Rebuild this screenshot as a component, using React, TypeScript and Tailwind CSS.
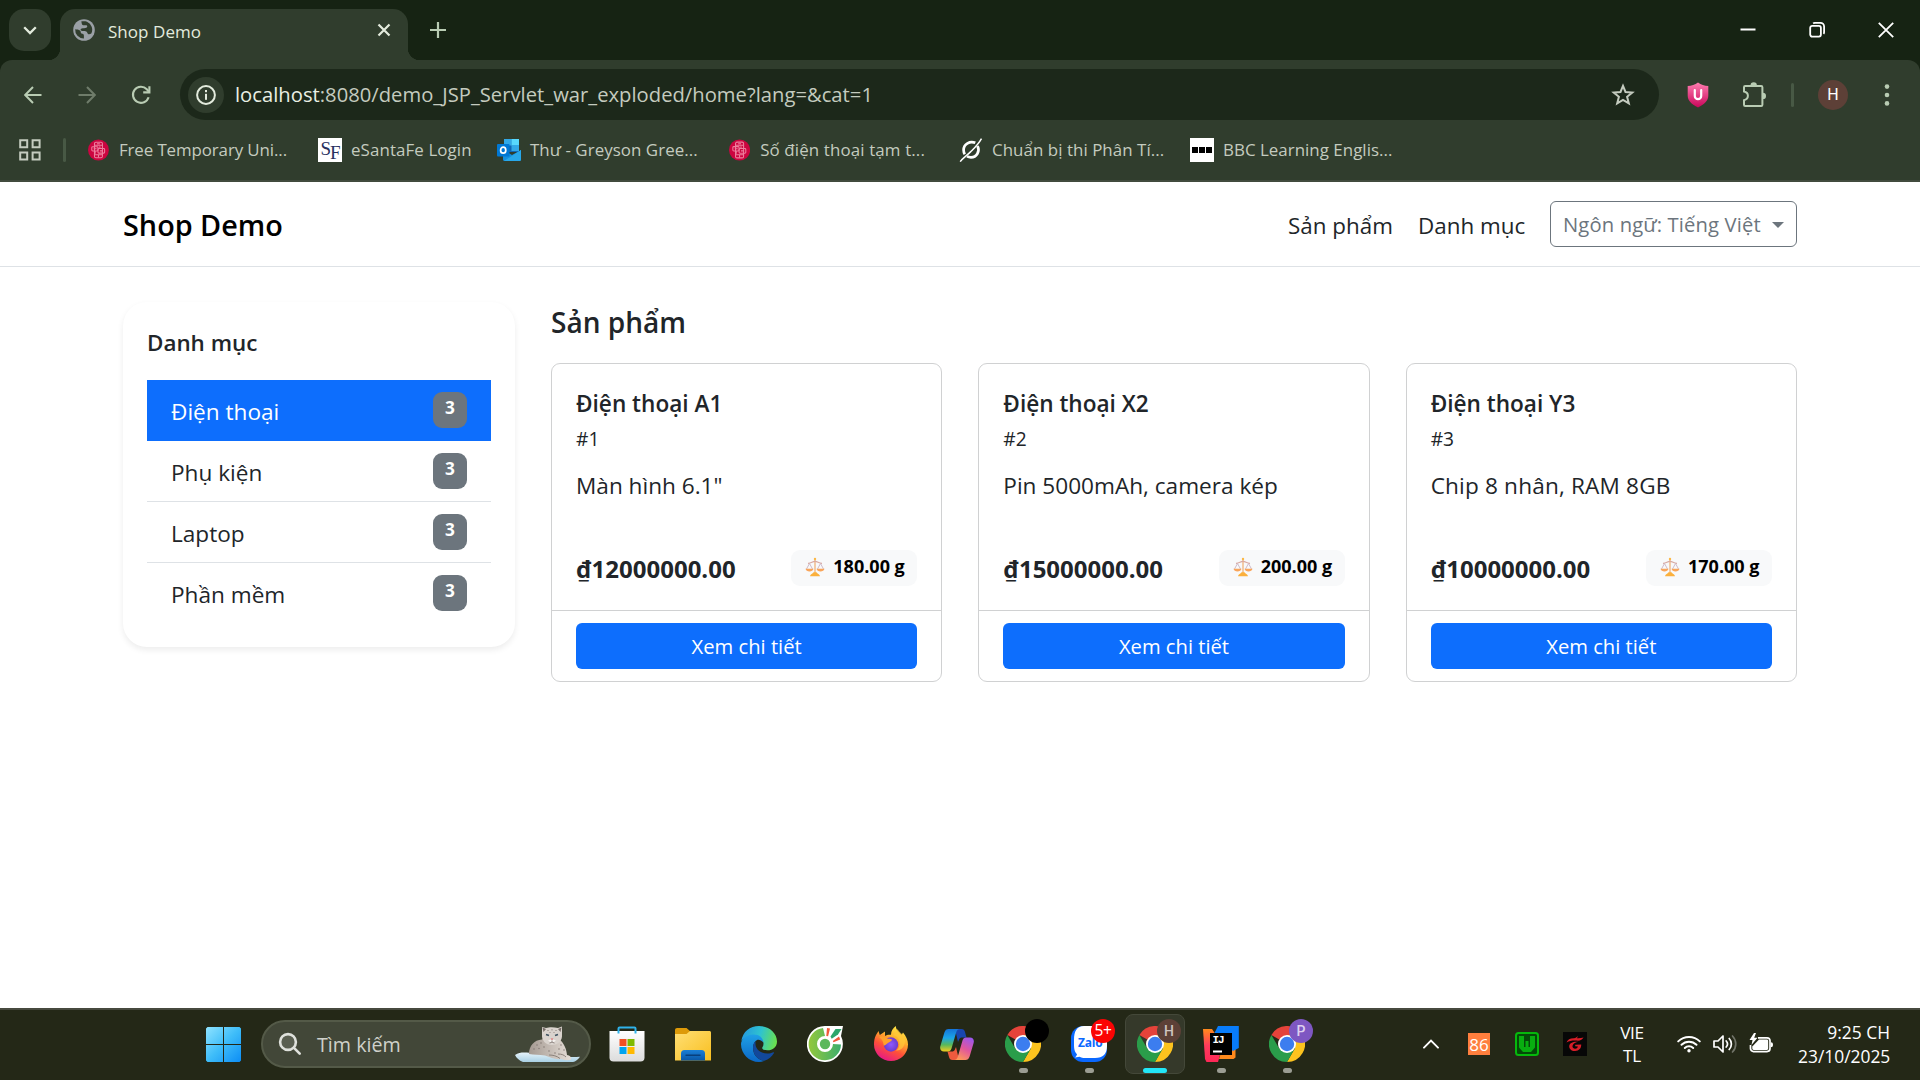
import React from "react";

type IconProps = { className?: string };

/* ---------- browser icons ---------- */

const Globe = () => (
  <svg viewBox="0 0 22 22" className="size-[22px]">
    <circle cx="11" cy="11" r="10.8" fill="#9aa0a6" />
    <path d="M2.2 10.2c1.8.2 3.6.2 4.8 1.4 1.200 1.100.3 2.300 1.500 3 1.200.600 2.300.400 2.400 1.800v3.100A8.600 8.600 0 0 1 2.200 10.200Z" fill="#303d2d" />
    <path d="M8.200 2.600c.8 1.500.2 2.900 1.500 3.500 1.600.700 3.300-.6 4.200.5.9 1.100-.1 2.100-1.500 2.400-1.700.4-3.500-.2-4.600 1-.6.8.2 1.900 1.300 2 1.700.1 3.400-.4 4.600.8.8.8.600 2 1.700 2.400 1 .3 2-.2 2.900-.7A8.700 8.700 0 0 0 14 2.700c-1.800-.6-4-.6-5.800-.1Z" fill="#303d2d" />
  </svg>
);

const ArrowLeft = ({ className }: IconProps) => (
  <svg viewBox="0 0 18 18" className={`size-[18px] ${className ?? ""}`} fill="none" stroke="currentColor" strokeWidth="2">
    <path d="M17.500 9H1.600M9 1 1.200 9 9 17" />
  </svg>
);

const Reload = () => (
  <svg viewBox="0 0 20 20" className="size-5" fill="none" stroke="#b9ccb3" strokeWidth="2.100">
    <path d="M17.600 12.200A8 8 0 1 1 15.800 4.300l2.200 2.400" />
    <path d="M18.400 1.200v6.200h-6.200" />
  </svg>
);

const Info = () => (
  <svg viewBox="0 0 20 20" className="size-5">
    <circle cx="10" cy="10" r="8.900" fill="none" stroke="#e3ebdd" strokeWidth="2" />
    <rect x="9" y="8.800" width="2" height="6" fill="#e3ebdd" />
    <rect x="9" y="5" width="2" height="2.200" fill="#e3ebdd" />
  </svg>
);

const Star = () => (
  <svg viewBox="0 0 24 24" className="size-6" fill="none" stroke="#c4cbbf" strokeWidth="2" strokeLinejoin="miter">
    <path d="M12 2.900 14.500 9l6.800.500-5.200 4.300 1.700 6.500L12 16.800l-5.800 3.500 1.700-6.500L2.700 9.500 9.500 9Z" />
  </svg>
);

const Shield = () => (
  <svg viewBox="0 0 22 26" className="h-[26px] w-[22px]">
    <defs>
      <linearGradient id="shield" x1="0" y1="0" x2="0" y2="1">
        <stop offset="0" stopColor="#ff7eb0" />
        <stop offset="1" stopColor="#c9065a" />
      </linearGradient>
    </defs>
    <path d="M11 .5c3 2.300 6.500 3.400 10.300 3.600v9.400c0 5.300-4 9-10.300 12C4.700 22.500.7 18.800.7 13.500V4.100C4.500 3.900 8 2.800 11 .5Z" fill="url(#shield)" />
    <path d="M7.800 8v6a3.200 3.200 0 0 0 6.400 0V8" fill="none" stroke="#fff" strokeWidth="2.200" strokeLinecap="round" />
  </svg>
);

const Puzzle = () => (
  <svg viewBox="0 0 26 26" className="size-[26px]">
    <path
      d="M4.200 4h16c.7 0 1.200.5 1.200 1.200v17.600c0 .7-.5 1.200-1.200 1.200H4.200C3.500 24 3 23.500 3 22.800v-4.600c2.500-.6 3.900-2 3.900-4.400S5.500 10 3 9.500V5.200C3 4.500 3.500 4 4.200 4Z"
      fill="none" stroke="#b9ccb3" strokeWidth="2"
    />
    <path d="M9.500 3.500a3.200 3.200 0 0 1 6.400 0ZM21.800 10.700a3.200 3.200 0 0 1 0 6.400Z" fill="#b9ccb3" />
  </svg>
);

const AppsGrid = () => (
  <svg viewBox="0 0 22 22" className="size-[22px]" fill="none" stroke="#c4cbbf" strokeWidth="2">
    <path d="M1.200 1.200h7v7h-7zM13.600 1.200h7v7h-7zM1.200 13.600h7v7h-7zM13.600 13.600h7v7h-7z" />
  </svg>
);

const PhonesIcon = () => (
  <svg viewBox="0 0 22 22" className="size-[22px]">
    <circle cx="11" cy="11" r="11" fill="#cb0540" />
    <g fill="none" stroke="#ee7f9d" strokeWidth="1.100">
      <rect x="6.800" y="2.800" width="8.400" height="16.400" rx="1.500" />
      <path d="M7 6h8M7 16h8M9.500 4.400h3M11 16v3" />
      <rect x="4" y="7.500" width="6.500" height="4.500" rx="1" />
      <rect x="10.500" y="9.500" width="7" height="4.800" rx="1" />
      <path d="M6 9.700h3M7.500 12v3M12.500 11.900h3M12.500 9V7" />
    </g>
  </svg>
);

const SantaFeIcon = () => (
  <span className="flex h-6 w-6 items-center justify-center bg-white font-['Liberation_Serif',serif] text-[19px] leading-none tracking-[-1px] text-[#27305f]">
    <span className="-mt-1">S</span>
    <span className="mt-1">F</span>
  </span>
);

const OutlookIcon = () => (
  <svg viewBox="0 0 24 22" className="h-[22px] w-6">
    <rect x="7" y="0" width="15" height="13" fill="#1066b5" />
    <rect x="7" y="0" width="7.500" height="6.500" fill="#32a9e7" />
    <rect x="14.500" y="0" width="7.500" height="6.500" fill="#58d9fd" />
    <rect x="14.500" y="6" width="7.500" height="6" fill="#32a9e7" />
    <path d="M6 11l9 5 9-5v9.500c0 .8-.7 1.500-1.500 1.500h-15C6.700 22 6 21.300 6 20.500Z" fill="#1490df" />
    <path d="M24 11v9.500c0 .8-.7 1.500-1.500 1.500H7Z" fill="#28a8ea" />
    <rect x="0" y="5" width="12.500" height="12.500" rx="1" fill="#0078d4" />
    <ellipse cx="6.200" cy="11.200" rx="2.600" ry="3" fill="none" stroke="#fff" strokeWidth="1.700" />
  </svg>
);

const SlashCircleIcon = () => (
  <svg viewBox="0 0 24 24" className="size-6" fill="none" stroke="#fff">
    <path d="M16.300 4.800C11 2.500 4.600 6 4.600 12c0 1.600.4 3 1.200 4.300M18.600 8c2.600 5.500-1 11.300-6.600 11.300-1.600 0-2.800-.3-4-.9" strokeWidth="2.700" />
    <path d="M22.500.6c-3.500 6.200-6.700 9-11 13.300C7.800 17.600 4 20 1.200 23.600" strokeWidth="1.500" />
  </svg>
);

const BbcIcon = () => (
  <span className="flex size-6 items-center justify-center gap-px bg-white">
    <i className="h-1.5 w-1.5 bg-black" />
    <i className="h-1.5 w-1.5 bg-black" />
    <i className="h-1.5 w-1.5 bg-black" />
  </span>
);

/* ---------- browser chrome ---------- */

const TabStrip = () => (
  <div className="flex h-[60px] bg-[#162313] text-[#e3ebdd]">
    <div className="ml-[9px] mt-[9px] flex h-[42px] w-[42px] items-center justify-center rounded-[15px] bg-[#303d2d]">
      <svg viewBox="0 0 14 9" className="h-[9px] w-3.5" fill="none" stroke="currentColor" strokeWidth="2.300">
        <path d="m1.200 1.200 5.800 5.800 5.800-5.800" />
      </svg>
    </div>
    <div className="ml-[-3px] mt-12 h-3 w-3 bg-[radial-gradient(circle_at_0_0,#162313_12px,#303d2d_12.500px)]" />
    <div className="mt-[9px] flex h-[51px] w-[348px] rounded-t-[15px] bg-[#303d2d]">
      <div className="ml-[13px] mt-2.5"><Globe /></div>
      <div className="ml-[13px] mt-[9px] w-[254px] text-[17px] leading-7 tracking-[.05px]">Shop Demo</div>
      <svg viewBox="0 0 14 14" className="ml-[15px] mt-3.5 size-3.5" fill="none" stroke="currentColor" strokeWidth="2.200">
        <path d="m1.500 1.500 11 11m0-11-11 11" />
      </svg>
    </div>
    <div className="mt-12 h-3 w-3 bg-[radial-gradient(circle_at_12px_0,#162313_12px,#303d2d_12.500px)]" />
    <svg viewBox="0 0 16 16" className="ml-2.5 mt-[22px] size-4" fill="none" stroke="#b9ccb3" strokeWidth="2.200">
      <path d="M8 0v16M0 8h16" />
    </svg>
    <div className="ml-auto mr-[26.500px] flex gap-[53px] pt-[21.500px] text-white">
      <svg viewBox="0 0 16 16" className="size-4"><path d="M.5 7.500h15" stroke="currentColor" strokeWidth="2" /></svg>
      <svg viewBox="0 0 16 16" className="size-4" fill="none" stroke="currentColor" strokeWidth="1.800">
        <rect x="1.200" y="3.900" width="10.700" height="10.700" rx="2" />
        <path d="M4.200 1.500c.4-.4.900-.6 1.500-.6h5.800a3.600 3.600 0 0 1 3.600 3.600v5.800c0 .6-.2 1.100-.6 1.500" />
      </svg>
      <svg viewBox="0 0 16 16" className="size-4" fill="none" stroke="currentColor" strokeWidth="1.800">
        <path d="m.8.8 14.400 14.400M15.200.8.8 15.200" />
      </svg>
    </div>
  </div>
);

const Toolbar = () => (
  <div className="bg-[#162313]">
    <div className="flex h-[69px] items-center rounded-t-[12px] bg-[#303d2d] pl-6">
      <ArrowLeft className="text-[#b9ccb3]" />
      <ArrowLeft className="ml-9 rotate-180 text-[#6f7c6a]" />
      <div className="ml-[35px]"><Reload /></div>
      <div className="ml-[29px] flex h-[51px] w-[1479px] items-center rounded-full bg-[#1c281a] pl-[8px] pr-6">
        <span className="flex size-9 items-center justify-center rounded-full bg-[#303d2d]"><Info /></span>
        <span className="ml-[11px] flex-1 pb-0.5 text-[20.200px] leading-7 tracking-[.02px] text-[#c4cbbf]">
          <span className="text-[#e9efe4]">localhost</span>:8080/demo_JSP_Servlet_war_exploded/home?lang=&amp;cat=1
        </span>
        <Star />
      </div>
      <div className="ml-7"><Shield /></div>
      <div className="ml-8"><Puzzle /></div>
      <i className="ml-[24px] h-6 w-[3px] rounded-full bg-[#485945]" />
      <span className="ml-[24px] flex h-[30px] w-[30px] items-center justify-center rounded-full bg-[#5d4037] font-[Roboto,sans-serif] text-[16px] text-white">H</span>
      <svg viewBox="0 0 6 22" className="ml-[36px] h-[22px] w-1.5" fill="#b9ccb3">
        <circle cx="3" cy="2.600" r="2.300" /><circle cx="3" cy="11" r="2.300" /><circle cx="3" cy="19.400" r="2.300" />
      </svg>
    </div>
  </div>
);

const bookmarks = [
  { label: "Free Temporary Uni...", icon: <PhonesIcon />, box: "ml-[22px] w-[199px]", text: "ml-2.5 tracking-[-.1px]" },
  { label: "eSantaFe Login", icon: <SantaFeIcon />, box: "ml-[31px] w-[154px]", text: "ml-[9px] tracking-[.1px]" },
  { label: "Thư - Greyson Gree...", icon: <OutlookIcon />, box: "ml-[25px] w-[201px]", text: "ml-[9px] tracking-[.05px]" },
  { label: "Số điện thoại tạm t...", icon: <PhonesIcon />, box: "ml-[31px] w-[196px]", text: "ml-2.5 tracking-[.13px]" },
  { label: "Chuẩn bị thi Phân Tí...", icon: <SlashCircleIcon />, box: "ml-[34px] w-[206px]", text: "ml-[9px] tracking-[.05px]" },
  { label: "BBC Learning Englis...", icon: <BbcIcon />, box: "ml-[25px] w-[203px]", text: "ml-[9px] tracking-[.03px]" },
];

const BookmarkBar = () => (
  <div className="flex h-[53px] items-center border-b-2 border-[#414b3e] bg-[#303d2d] pb-[9px] pl-[19px]">
    <AppsGrid />
    <i className="ml-[22px] h-6 w-[3px] rounded-full bg-[#485945]" />
    {bookmarks.map((b) => (
      <div key={b.label} className={`flex shrink-0 items-center whitespace-nowrap ${b.box}`}>
        {b.icon}
        <span className={`text-[16.900px] leading-6 text-[#c4cbbf] ${b.text}`}>{b.label}</span>
      </div>
    ))}
  </div>
);

/* ---------- shop page ---------- */

const SiteHeader = () => (
  <header className="flex h-[85px] items-start justify-between border-b border-[#dee2e6] px-[123px] text-[#212529]">
    <div className="pt-[25px] text-[28.800px] font-semibold leading-9 text-black">Shop Demo</div>
    <nav className="flex pt-[19px]">
      <a className="mt-[9px] w-[130px] text-[22.400px] leading-8">Sản phẩm</a>
      <a className="mt-[9px] w-[132px] text-[22.400px] leading-8">Danh mục</a>
      <button className="flex h-[46px] w-[247px] rounded-[6px] border border-[#6c757d] pl-[12px] pt-[8px] text-[20.200px] leading-7 tracking-[.14px] text-[#6c757d]">
        Ngôn ngữ: Tiếng Việt
        <svg viewBox="0 0 12 6" className="ml-auto mr-[12px] mt-[12px] h-1.5 w-3" fill="currentColor"><path d="M0 0h12L6 6Z" /></svg>
      </button>
    </nav>
  </header>
);

const categories = ["Điện thoại", "Phụ kiện", "Laptop", "Phần mềm"];

const Sidebar = () => (
  <aside className="h-[345px] w-[392px] rounded-[24px] bg-white px-6 pt-[27px] shadow-[0_3px_6px_rgba(0,0,0,0.075)]">
    <h5 className="text-[22.400px] font-semibold leading-7">Danh mục</h5>
    <ul className="mt-[23px]">
      {categories.map((name, i) => (
        <li
          key={name}
          className={`flex h-[61px] justify-between px-6 pt-3 ${i === 0 ? "bg-[#0d6efd] text-white" : i < 3 ? "border-b border-[#dee2e6]" : ""}`}
        >
          <span className="pt-0.5 text-[22.600px] leading-9">{name}</span>
          <span className="h-9 w-[34px] rounded-[9px] bg-[#6c757d] text-center text-[17.300px] font-bold leading-[31px] text-white">3</span>
        </li>
      ))}
    </ul>
  </aside>
);

const Scale = () => (
  <svg viewBox="0 0 20 20" className="size-5" fill="none">
    <path d="M10 1v15" stroke="#f0b27a" strokeWidth="1.300" />
    <path d="M3 6.300c3 .2 4.500-2 7-2s4 2.200 7 2" stroke="#d9a9a0" strokeWidth="1.200" />
    <path d="M4.500 6.500 1.500 12M4.500 6.500l3 5.500M15.500 6.500l-3 5.500M15.500 6.500l3 5.500" stroke="#c9b3c4" strokeWidth=".9" />
    <path d="M.5 11.800h8c-.5 1.900-1.900 2.700-4 2.700s-3.500-.8-4-2.700ZM11.500 11.800h8c-.5 1.900-1.900 2.700-4 2.700s-3.500-.8-4-2.700Z" fill="#f9a55a" />
    <path d="M8.500 15.300h3c.3 1.200 2.600 1.500 3.400 3.400v.6H5.100v-.6c.8-1.900 3.100-2.200 3.400-3.400Z" fill="#fbb03c" />
    <circle cx="10" cy="2" r="1.200" fill="#fbb947" />
  </svg>
);

const products = [
  { id: 1, name: "Điện thoại A1", text: 'Màn hình 6.1"', price: "₫12000000.00", weight: "180.00 g" },
  { id: 2, name: "Điện thoại X2", text: "Pin 5000mAh, camera kép", price: "₫15000000.00", weight: "200.00 g" },
  { id: 3, name: "Điện thoại Y3", text: "Chip 8 nhân, RAM 8GB", price: "₫10000000.00", weight: "170.00 g" },
];

const ProductCard = ({ p }: { p: (typeof products)[number] }) => (
  <article className="h-[319px] rounded-[9px] border border-[#d0d1d2]">
    <div className="h-[246px] px-6 pt-[26px]">
      <h5 className="text-[22.600px] font-semibold leading-7">{p.name}</h5>
      <div className="mt-[5px] text-[19.200px] leading-8">#{p.id}</div>
      <p className={`mt-[13px] text-[22.600px] leading-9 ${p.id === 3 ? "tracking-[.17px]" : ""}`}>{p.text}</p>
      <div className="mt-[46px] flex justify-between">
        <span className="pt-0.5 text-[24px] font-bold leading-[34px]">{p.price}</span>
        <span className="flex h-9 w-[126px] rounded-[9px] bg-[#f8f9fa] pl-[14px] text-[18px] font-bold leading-8 text-black">
          <span className="mr-[8px] mt-[7px] block"><Scale /></span>
          {p.weight}
        </span>
      </div>
    </div>
    <div className="border-t border-[#d0d1d2] px-6 py-3">
      <button className="block h-[46px] w-full rounded-[6px] bg-[#0d6efd] text-[20.200px] leading-[46px] text-white">Xem chi tiết</button>
    </div>
  </article>
);

const ShopPage = () => (
  <div className="h-[826px] overflow-hidden bg-white text-[#212529]">
    <SiteHeader />
    <div className="flex gap-9 px-[123px] pt-[35px]">
      <Sidebar />
      <main className="flex-1">
        <h2 className="text-[28px] font-semibold leading-10">Sản phẩm</h2>
        <div className="mt-[21px] grid grid-cols-3 gap-9">
          {products.map((p) => <ProductCard key={p.id} p={p} />)}
        </div>
      </main>
    </div>
  </div>
);

/* ---------- taskbar icons ---------- */

const WindowsLogo = () => (
  <svg viewBox="0 0 35 35" className="size-[35px]">
    <defs>
      <linearGradient id="win" gradientUnits="userSpaceOnUse" x1="0" y1="0" x2="35" y2="35">
        <stop offset="0" stopColor="#8fe3ff" />
        <stop offset=".5" stopColor="#3fbdf9" />
        <stop offset="1" stopColor="#0c8df5" />
      </linearGradient>
    </defs>
    <g fill="url(#win)">
      <path d="M1.500 0H17v17H0V1.500ZM18 0h15.500L35 1.500V17H18ZM0 18h17v17H1.500L0 33.500ZM18 18h17v15.500L33.500 35H18Z" />
    </g>
  </svg>
);

const Leopard = () => (
  <svg viewBox="0 0 66 38" className="h-[38px] w-[66px]">
    <defs>
      <linearGradient id="snow" x1="0" y1="0" x2="0" y2="1">
        <stop offset="0" stopColor="#e6f3fa" />
        <stop offset="1" stopColor="#a9d0e4" />
      </linearGradient>
      <linearGradient id="fur" x1="0" y1="0" x2="1" y2="0">
        <stop offset="0" stopColor="#a59a92" />
        <stop offset="1" stopColor="#e4ddd6" />
      </linearGradient>
    </defs>
    <path d="M0 30c6-4 13-2 19-1.600 14 .8 30 5 46 3.300-2 3.300-4.500 4.600-7 5.300H8C4 35.500 1.500 33 0 30Z" fill="url(#snow)" />
    <path d="M14 29c0-8 5-14 13-14.500L30 12l14 2c5 4 7.500 10 8 16 3 .5 4.500 2 4 4.500-3 1-7 .8-10-.5-6 .8-10-1.500-16-3.500-6-1-11-.3-16-1.500Z" fill="url(#fur)" />
    <path d="M27 10V2l4 1c3-1 8-1 12 0l4-1.500V10c.5 5-3.500 10-10 10s-10.500-5-10-10Z" fill="#d9d3cd" />
    <path d="M27.500 2.500 31 4l-2.500 3ZM46.500 2.500 43 4l2.500 3Z" fill="#776d68" />
    <path d="M31 9.500l3 1M43 9.500l-3 1" stroke="#3f5361" strokeWidth="1.600" />
    <path d="M33 15.500c2-1.500 6-1.500 8 0l-4 3Z" fill="#f4f1ee" />
    <path d="M35.500 13.500h3L37 15.300Z" fill="#d9686c" />
    <path d="M37 15.500v1.700M34.500 18l2.500-.8 2.500.8" stroke="#6d625d" strokeWidth=".7" fill="none" />
    <g fill="#7d736d">
      <circle cx="33" cy="5.500" r=".6" /><circle cx="37" cy="4.800" r=".6" /><circle cx="41" cy="5.500" r=".6" /><circle cx="35" cy="7.500" r=".5" /><circle cx="39" cy="7.500" r=".5" />
      <circle cx="22" cy="20" r=".7" /><circle cx="26" cy="18" r=".7" /><circle cx="19" cy="24" r=".7" /><circle cx="24" cy="23.500" r=".7" /><circle cx="29" cy="22" r=".7" />
      <circle cx="46" cy="20" r=".7" /><circle cx="49" cy="25" r=".7" /><circle cx="44" cy="24" r=".7" /><circle cx="34" cy="26" r=".7" /><circle cx="40" cy="28" r=".7" />
    </g>
    <path d="M34 30c4 0 8 1 11 3.500M43 29c4 0 6 1 8 3" stroke="#8c827b" strokeWidth="1" fill="none" />
  </svg>
);

const StoreIcon = () => (
  <svg viewBox="0 0 36 36" className="size-9">
    <defs>
      <linearGradient id="bag" x1="0" y1="0" x2="0" y2="1">
        <stop offset="0" stopColor="#fff" /><stop offset="1" stopColor="#dcdcdc" />
      </linearGradient>
    </defs>
    <path d="M.5 5h35v26.500a4 4 0 0 1-4 4h-27a4 4 0 0 1-4-4Z" fill="url(#bag)" />
    <path d="M9.500 7.500V2.600c0-.6.4-1 1-1h15c.6 0 1 .4 1 1v4.900" fill="none" stroke="#2fb2ea" strokeWidth="2" />
    <path d="M10.500 13h7v7h-7Z" fill="#f25022" /><path d="M18.500 13h7v7h-7Z" fill="#7fba00" />
    <path d="M10.500 21h7v7h-7Z" fill="#00a4ef" /><path d="M18.500 21h7v7h-7Z" fill="#ffb900" />
  </svg>
);

const FolderIcon = () => (
  <svg viewBox="0 0 36 36" className="size-9">
    <defs>
      <linearGradient id="fold" x1="0" y1="0" x2="1" y2="1">
        <stop offset="0" stopColor="#ffdf75" /><stop offset="1" stopColor="#f9bf1f" />
      </linearGradient>
      <linearGradient id="foldb" x1="0" y1="0" x2="0" y2="1">
        <stop offset="0" stopColor="#1a7fd6" /><stop offset="1" stopColor="#0a57a6" />
      </linearGradient>
    </defs>
    <path d="M0 4c0-1.100.9-2 2-2h9.500l4 3.500L12 9H0Z" fill="#dd9a09" />
    <path d="M0 8h11.500L15 5h19.500c.8 0 1.500.7 1.500 1.500V34.500H0Z" fill="url(#fold)" />
    <path d="M6 34.500V27.500A3.500 3.500 0 0 1 9.500 24h17a3.500 3.500 0 0 1 3.500 3.500v7Z" fill="url(#foldb)" />
    <path d="M11 29.200h14" stroke="#083f7c" strokeWidth="1.400" strokeLinecap="round" />
  </svg>
);

const EdgeIcon = () => (
  <svg viewBox="0 0 36 36" className="size-9">
    <defs>
      <linearGradient id="edgeTop" x1="0" y1=".4" x2="1" y2=".6">
        <stop offset="0" stopColor="#2499df" /><stop offset=".5" stopColor="#2fc3cf" /><stop offset="1" stopColor="#6be14b" />
      </linearGradient>
      <linearGradient id="edgeBody" x1="0" y1="0" x2="0" y2="1">
        <stop offset="0" stopColor="#1fa0e6" /><stop offset="1" stopColor="#0b67c6" />
      </linearGradient>
    </defs>
    <path d="M.3 15C1.800 5.600 9 0 18 0c10 0 18 7 18 15.500 0 5.500-4.300 8.800-9.500 8.800-3.500 0-5.300-1-5.300-2.300 0-1 1.300-1.500 1.300-4.300 0-3.800-4-7.400-9.500-7.400C7 10.300 2.500 12 .3 15Z" fill="url(#edgeTop)" />
    <path d="M0 18c0-5 5.500-9.500 12.500-9.500 6 0 9.700 3.500 9.800 8-1.800-2.500-4.300-3.200-5.800-2.700-3 1.200-4.500 4.500-4.500 8C12 29 17 34 23.500 34.800c-2 .8-3.500 1.200-5.500 1.200C8 36 0 28 0 18Z" fill="url(#edgeBody)" />
    <path d="M14.500 15c-1.700 1.700-2.500 4-2.500 6.800C12 29 17 34 23.500 34.800c4-1.500 7.500-4.300 9.500-7.800.3-.6-.2-1-.8-.7-1.700.9-3.700 1.300-5.700 1.300-7 0-12-4.500-12-9.500 0-1 0-2 0-3.100Z" fill="#12489b" />
  </svg>
);

const CocCocIcon = () => (
  <svg viewBox="0 0 36 36" className="size-9">
    <defs>
      <linearGradient id="coc" x1="0" y1="0" x2="1" y2="0">
        <stop offset="0" stopColor="#93c83d" /><stop offset="1" stopColor="#3cae6c" />
      </linearGradient>
    </defs>
    <path d="M18 0h18l-2 10a18 18 0 1 1-16-10Z" fill="#fff" />
    <path d="M16 2a16.200 16.200 0 1 0 18 16.500l-8-.5a8 8 0 1 1-8-8Z" fill="url(#coc)" />
    <circle cx="18" cy="18" r="5.200" fill="#5cb85c" />
    <path d="M19.300 10 20 2l3 .6-1.900 7.600ZM25.800 15l6.200-4.500 1.200 3-6.700 2.800Z" fill="#f0593a" />
    <path d="M23.500 10.500 28.500 3h6l-3.500 5.500-6.300 4.300Z" fill="#2ca66b" />
  </svg>
);

const FirefoxIcon = () => (
  <svg viewBox="0 0 34 36" className="h-9 w-[34px]">
    <defs>
      <linearGradient id="ff" x1=".8" y1="0" x2=".3" y2="1">
        <stop offset="0" stopColor="#fff14a" /><stop offset=".35" stopColor="#ffb22c" /><stop offset=".65" stopColor="#ff5138" /><stop offset="1" stopColor="#e5168a" />
      </linearGradient>
      <radialGradient id="ffc"><stop offset="0" stopColor="#9059ff" /><stop offset="1" stopColor="#6b3ccc" /></radialGradient>
    </defs>
    <path d="M2 9 4.500 5l1.300 4L11 5.500V10c2-1.500 4-1.500 6-1.200C17 5 19 2 21.800 0 22 4 25 6 27.500 9L29 6.500C32 10 34 14 34 18.500A17 16.500 0 0 1 0 18.500C0 15 .5 12 2 9Z" fill="url(#ff)" />
    <circle cx="17" cy="18.500" r="7.200" fill="url(#ffc)" />
    <path d="M5 11c3-1.500 6-.5 8 1.500 2 .2 4 .3 5.300 1.300-1 1.700-3.300 2.200-4.700 3.500-1.600 1.500-3 2.700-4 2 0-3-1.500-6.500-4.600-8.300Z" fill="#ffa12b" />
    <path d="M18.500 9c4 0 7.500 3.500 7 9.500-.3 3-1.800 5-3.500 6 5 .5 9-4 9-9.500 0-3-1-5-3-7-1.500-1-3-2.500-4.500-5-.5 2.500-2.500 5-5 6Z" fill="#ffc83a" opacity=".75" />
  </svg>
);

const CopilotIcon = () => (
  <svg viewBox="0 0 34 31" className="h-[31px] w-[34px]">
    <defs>
      <linearGradient id="cpa" x1="0" y1="0" x2="0" y2="1">
        <stop offset="0" stopColor="#1473d8" /><stop offset=".4" stopColor="#1ba5e8" /><stop offset=".7" stopColor="#57b85c" /><stop offset="1" stopColor="#f3cc1d" />
      </linearGradient>
      <linearGradient id="cpb" x1=".8" y1="0" x2=".3" y2="1">
        <stop offset="0" stopColor="#9b57ee" /><stop offset=".5" stopColor="#e0569d" /><stop offset="1" stopColor="#ff9a57" />
      </linearGradient>
    </defs>
    <path d="M15 0h6.500c2 0 3 1 3.500 3l1.500 5.500h-4c-2 0-3 .5-3.600 2.500L18 13Z" fill="#1846b0" />
    <path d="M19 31h-6.500c-2 0-3-1-3.500-3l-1.500-5.500h4c2 0 3-.5 3.600-2.500L16 18Z" fill="#ef5a3e" />
    <path d="M8.500 0H20c-2 0-3 1-3.700 3l-4.800 16.500c-.7 2-1.700 3-3.500 3H4c-3 0-4.500-2.500-3.600-5.500l4-13.500C5.200 1 6.500 0 8.500 0Z" fill="url(#cpa)" />
    <path d="M25.500 31H14c2 0 3-1 3.700-3l4.800-16.500c.7-2 1.700-3 3.500-3h4c3 0 4.500 2.500 3.600 5.500l-4 13.500c-.8 2.500-2.100 3.500-4.100 3.500Z" fill="url(#cpb)" />
  </svg>
);

const ChromeIcon = () => (
  <svg viewBox="0 0 36 36" className="size-9">
    <path d="M18 18 2.400 9A18 18 0 0 1 33.600 9Z" fill="#e5433a" />
    <path d="M18 9h15.600A18 18 0 0 1 18 36l7.800-13.500Z" fill="#fcc31e" />
    <path d="M2.400 9A18 18 0 0 0 18 36l7.800-13.500L10.200 22.500Z" fill="#2a9d4a" />
    <circle cx="18" cy="18" r="9" fill="#fff" />
    <circle cx="18" cy="18" r="7.200" fill="#3c7def" />
  </svg>
);

const ZaloIcon = () => (
  <div className="relative size-9">
    <svg viewBox="0 0 36 36" className="size-9">
      <rect width="36" height="36" rx="12" fill="#0a68ff" />
      <path d="M13 0h11c8 0 12 4 12 12v8c0 8-4 12-12 12H14c-2 0-4-.4-5.500-1.200L4 31.500c1-1 1.800-2 2-3.200C3.500 25.500 3 23 3 18v-4C3 5 6 0 13 0Z" fill="#fff" />
    </svg>
    <span className="absolute left-[7px] top-[8px] text-[12px] font-bold leading-[18px] tracking-[-.2px] text-[#0a68ff]">Zalo</span>
  </div>
);

const IntelliJIcon = () => (
  <div className="relative size-9">
    <svg viewBox="0 0 36 36" className="size-9">
      <defs>
        <linearGradient id="ij" x1="0" y1="0" x2="0" y2="1">
          <stop offset="0" stopColor="#ff8a1c" /><stop offset=".5" stopColor="#ff3b5c" /><stop offset="1" stopColor="#fe2857" />
        </linearGradient>
      </defs>
      <path d="M0 3h9l8 12v14l-2 7H3.500L2 33Z" fill="url(#ij)" />
      <path d="M20 20h12.500v11.500l-2 1.500H16Z" fill="#ff8a1c" />
      <path d="M15 0h20.800v22L30 25 11 8Z" fill="#087cfa" />
      <rect x="7" y="7" width="22" height="22" />
      <rect x="10" y="24.500" width="9" height="2" fill="#fff" />
    </svg>
    <span className="absolute left-[9.500px] top-[7px] font-['Liberation_Mono',monospace] text-[11px] font-bold leading-[14px] tracking-[-1.200px] text-white">IJ</span>
  </div>
);

/* ---------- taskbar ---------- */

type AppEntry = {
  id: string;
  icon: React.ReactNode;
  badge?: React.ReactNode;
  running?: boolean;
  active?: boolean;
};

const badgeBase = "absolute -right-2 -top-[7px] flex size-6 items-center justify-center rounded-full";

const apps: AppEntry[] = [
  { id: "store", icon: <StoreIcon /> },
  { id: "explorer", icon: <FolderIcon /> },
  { id: "edge", icon: <EdgeIcon /> },
  { id: "coccoc", icon: <CocCocIcon /> },
  { id: "firefox", icon: <FirefoxIcon /> },
  { id: "copilot", icon: <CopilotIcon /> },
  { id: "chrome-1", icon: <ChromeIcon />, running: true, badge: <span className={`${badgeBase} bg-black`} /> },
  { id: "zalo", icon: <ZaloIcon />, running: true, badge: <span className={`${badgeBase} bg-[#fb0404] text-[15.500px] leading-none tracking-[-.3px] text-white`}>5+</span> },
  { id: "chrome-h", icon: <ChromeIcon />, running: true, active: true, badge: <span className={`${badgeBase} bg-[#5d4037] font-[Roboto,sans-serif] text-[14px] font-medium text-[#cfc4c0]`}>H</span> },
  { id: "intellij", icon: <IntelliJIcon />, running: true },
  { id: "chrome-p", icon: <ChromeIcon />, running: true, badge: <span className={`${badgeBase} bg-[#7e57c2] font-[Roboto,sans-serif] text-[14px] font-medium text-[#ddd0f0]`}>P</span> },
];

const Tray = () => (
  <div className="ml-auto mr-[30px] flex items-center text-white">
    <svg viewBox="0 0 16 10" className="h-2.5 w-4" fill="none" stroke="currentColor" strokeWidth="1.900" strokeLinecap="round">
      <path d="m1 8.700 7-7 7 7" />
    </svg>
    <span className="ml-[29px] flex h-[22px] w-[22px] items-center justify-center bg-[#ff7f3e] text-[17px] leading-none">86</span>
    <svg viewBox="0 0 24 24" className="ml-[25px] size-6">
      <rect x="1" y="1" width="22" height="22" rx="2.500" fill="#044a08" stroke="#06b80c" strokeWidth="2" />
      <path d="M4 4v11.500L8 20h8l4-4.500V4h-5v11h-1.500V9h-3v6H9V4Z" fill="#08ae10" />
    </svg>
    <svg viewBox="0 0 24 24" className="ml-6 size-6">
      <rect width="24" height="24" fill="#070707" />
      <path d="M3.500 10.500C4.500 7.500 7.500 6 11 6.200c1.500 0 3-1 3.800-2.200-.2 1.200-.6 1.800-1 2.200 2.300.1 4.700 0 6.700-.7-1 2-3 3-5.500 3.300-3-.3-8-.5-11.500 1.700Z" fill="#d81e28" />
      <path d="M15.500 9.800c-5-.7-9 1-9.300 4.200-.2 3 2.500 5.300 6 5 3.800-.3 6.200-2.700 6-6.500l-6 .3v1.500l2.700.2c-.4 1.500-1.500 2.300-3 2.200-2-.2-2.900-1.700-2.200-3.500.8-1.800 2.800-2.900 5.800-3.400Z" fill="#d81e28" />
    </svg>
    <div className="ml-8 w-[26px] whitespace-nowrap text-center text-[17.200px] leading-[23px] tracking-[-.3px]">
      <div>VIE</div>
      <div>TL</div>
    </div>
    <svg viewBox="0 0 24 18" className="ml-8 h-[18px] w-6" fill="none" stroke="currentColor" strokeWidth="1.900" strokeLinecap="round">
      <path d="M1.200 6.400a15.300 15.300 0 0 1 21.600 0M4.500 9.800a10.700 10.700 0 0 1 15 0M7.800 13a6 6 0 0 1 8.400 0" />
      <circle cx="12" cy="15.800" r="1.700" fill="currentColor" stroke="none" />
    </svg>
    <svg viewBox="0 0 24 20" className="ml-3 h-5 w-6" fill="none" stroke="currentColor" strokeWidth="1.700" strokeLinecap="round" strokeLinejoin="round">
      <path d="M1 7h4l5-5v16l-5-5H1ZM13.200 7a4.500 4.500 0 0 1 0 6M16.200 4.500a8 8 0 0 1 0 11" />
      <path d="M19.500 2a11.500 11.500 0 0 1 0 16" opacity=".35" />
    </svg>
    <svg viewBox="0 0 24 20" className="ml-3 mt-[-3px] h-5 w-6">
      <path d="M9 4.800h9a3 3 0 0 1 3 3v7.800a3 3 0 0 1-3 3H4.500a3 3 0 0 1-3-3V12" fill="none" stroke="currentColor" strokeWidth="1.700" />
      <path d="M10 6.500h7.800c.8 0 1.400.6 1.400 1.400v7.600c0 .8-.6 1.400-1.400 1.400H4.700c-.8 0-1.400-.6-1.400-1.400v-2Z" fill="currentColor" />
      <path d="M21.800 9.200c1.400 0 2.200.8 2.200 2.500s-.8 2.500-2.200 2.500Z" fill="currentColor" />
      <path d="M5 0 .5 7h3L2.500 12 8.500 4.800H5.200L7 0Z" fill="currentColor" />
    </svg>
    <div className="ml-[25px] w-[92px] whitespace-nowrap text-right text-[17.400px] leading-6">
      <div>9:25 CH</div>
      <div>23/10/2025</div>
    </div>
  </div>
);

const Taskbar = () => (
  <footer className="flex h-[72px] items-center border-t-2 border-[#474a3f] bg-[#242817] pb-0.5 pl-[206px]">
    <WindowsLogo />
    <div className="ml-5 flex h-12 w-[330px] items-center rounded-full border-2 border-[#545a48] bg-[#424738] pl-[15px]">
      <svg viewBox="0 0 24 24" className="size-6" fill="none" stroke="#dfe1dc" strokeWidth="2.600" strokeLinecap="round">
        <circle cx="10" cy="10" r="7.900" fill="#5a5f51" /><path d="m16.200 16.200 5.500 5.500" />
      </svg>
      <span className="ml-[15px] flex-1 pt-px text-[19.700px] leading-8 text-[#cfd1ca]">Tìm kiếm</span>
      <span className="mr-[8px]"><Leopard /></span>
    </div>
    <div className="ml-[6px] flex gap-[6px]">
      {apps.map((a) => (
        <div
          key={a.id}
          className={`flex h-[60px] w-[60px] flex-col items-center rounded-[8px] border ${a.active ? "border-[#444839] bg-[#35392a]" : "border-transparent"}`}
        >
          <div className="relative mt-[11px] flex h-9 items-center justify-center">
            {a.icon}
            {a.badge}
          </div>
          {a.running && <i className={`mt-[6px] h-[5px] rounded-full ${a.active ? "w-6 bg-[#22e6f7]" : "w-[9px] bg-[#9b9d93]"}`} />}
        </div>
      ))}
    </div>
    <Tray />
  </footer>
);

export default function App() {
  return (
    <div className="h-[1080px] w-[1920px] overflow-hidden bg-white font-['Open_Sans','Noto_Sans',sans-serif]">
      <TabStrip />
      <Toolbar />
      <BookmarkBar />
      <ShopPage />
      <Taskbar />
    </div>
  );
}
